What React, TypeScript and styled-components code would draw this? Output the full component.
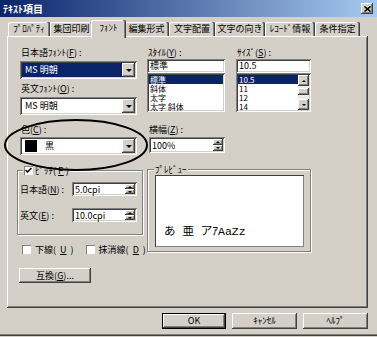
import React from 'react'
import styled, { createGlobalStyle } from 'styled-components'

const face = '#d4d0c8'
const shadow = '#808080'
const dark = '#404040'
const navy = '#0a246a'

const raised = `box-shadow: inset -1px -1px ${dark}, inset 1px 1px #fff, inset -2px -2px ${shadow};`
const sunken = `box-shadow: inset 1px 1px ${shadow}, inset -1px -1px #fff, inset 2px 2px ${dark}, inset -2px -2px ${face};`

const GlobalStyle = createGlobalStyle`
  html, body {
    margin: 0;
    padding: 0;
    background: ${face};
  }
  body {
    font-family: "Noto Sans CJK JP", "Liberation Sans", sans-serif;
    font-size: 9px;
    color: #000;
  }
  * {
    box-sizing: border-box;
  }
`

const Dialog = styled.div`
  width: 377px;
  height: 336px;
  display: flex;
  flex-direction: column;
  background: ${face};
  border-bottom: 1px solid ${dark};
  box-shadow: inset 0 -1px ${shadow};
`

const TitleBar = styled.div`
  flex: none;
  height: 17px;
  display: flex;
  align-items: center;
  justify-content: space-between;
  padding: 0 4px 0 3px;
  background: linear-gradient(to right, ${navy}, #a6caf0);
`

const Title = styled.span`
  color: #fff;
  font-weight: bold;
  font-size: 10px;
  line-height: 17px;
`

const CloseButton = styled.div`
  width: 12px;
  height: 11px;
  display: grid;
  place-items: center;
  background: ${face};
  ${raised}
`

const Body = styled.div`
  padding: 0 9px 0 7px;
`

const TabRow = styled.div`
  display: flex;
  align-items: flex-end;
  height: 16px;
  margin-top: 3px;
  padding-left: 1px;
`

const Tab = styled.div<{ $w: number; $active?: boolean }>`
  flex: none;
  position: relative;
  z-index: ${p => (p.$active ? 1 : 0)};
  width: ${p => p.$w + (p.$active ? 4 : 0)}px;
  height: ${p => (p.$active ? 18 : 14)}px;
  margin: ${p => (p.$active ? '0 -2px -2px' : '0')};
  padding-top: ${p => (p.$active ? 1 : 0)}px;
  line-height: 14px;
  text-align: center;
  white-space: nowrap;
  background: ${face};
  border-radius: 2px 2px 0 0;
  box-shadow: inset -1px 0 ${dark}, inset -2px 0 ${shadow}, inset 1px 1px #fff;
`

const Panel = styled.div`
  position: relative;
  height: 272px;
  padding: 11px 0 0 10px;
  display: grid;
  grid-template-columns: 126px 164px;
  column-gap: 4px;
  align-content: start;
  align-items: start;
  ${raised}
`

const Cell = styled.div<{ $mt?: number; $wide?: boolean }>`
  display: flex;
  flex-direction: column;
  align-items: flex-start;
  margin-top: ${p => p.$mt ?? 0}px;
  grid-column: ${p => (p.$wide ? '1 / -1' : 'auto')};
`

const FieldLabel = styled.div<{ $mt?: number; $ml?: number }>`
  height: 11px;
  line-height: 11px;
  white-space: nowrap;
  margin-top: ${p => p.$mt ?? 0}px;
  margin-left: ${p => p.$ml ?? 0}px;
`

const Combo = styled.div<{ $mt?: number }>`
  width: 117px;
  height: 18px;
  margin: ${p => p.$mt ?? 0}px 0 0 3px;
  display: flex;
  padding: 2px;
  background: #fff;
  ${sunken}
`

const ComboValue = styled.div<{ $selected?: boolean }>`
  flex: 1;
  display: flex;
  align-items: center;
  gap: 8px;
  padding-left: 3px;
  line-height: 14px;
  white-space: nowrap;
  background: ${p => (p.$selected ? navy : 'transparent')};
  color: ${p => (p.$selected ? '#fff' : '#000')};
`

const DropButton = styled.div`
  flex: none;
  width: 13px;
  display: grid;
  place-items: center;
  background: ${face};
  ${raised}
`

const Arrow = styled.span<{ $up?: boolean; $size?: number }>`
  width: 0;
  height: 0;
  border-left: ${p => p.$size ?? 3}px solid transparent;
  border-right: ${p => p.$size ?? 3}px solid transparent;
  ${p =>
    p.$up
      ? `border-bottom: ${p.$size ?? 3}px solid #000;`
      : `border-top: ${p.$size ?? 3}px solid #000;`}
`

const Swatch = styled.span`
  width: 12px;
  height: 12px;
  background: #000;
`

const Pickers = styled.div`
  display: flex;
  gap: 11px;
`

const Picker = styled.div<{ $w: number }>`
  width: ${p => p.$w}px;
  display: flex;
  flex-direction: column;
`

const Edit = styled.div`
  height: 14px;
  margin-top: 1px;
  padding-left: 3px;
  line-height: 14px;
  background: #fff;
  ${sunken}
`

const List = styled.div`
  height: 39px;
  padding: 2px;
  display: flex;
  overflow: hidden;
  background: #fff;
  ${sunken}
`

const Items = styled.div`
  flex: 1;
  display: flex;
  flex-direction: column;
`

const Item = styled.div<{ $selected?: boolean }>`
  flex: none;
  height: 9px;
  font-size: 8px;
  line-height: 9px;
  padding-left: 1px;
  white-space: nowrap;
  background: ${p => (p.$selected ? navy : 'transparent')};
  color: ${p => (p.$selected ? '#fff' : '#000')};
`

const ScrollBar = styled.div`
  flex: none;
  width: 11px;
  display: flex;
  flex-direction: column;
`

const ScrollButton = styled.div`
  height: 11px;
  display: grid;
  place-items: center;
  background: ${face};
  ${raised}
`

const Track = styled.div`
  flex: 1;
  padding-top: 2px;
  background: #ecebe8;
`

const Thumb = styled.div`
  height: 7px;
  background: ${face};
  ${raised}
`

const SpinEdit = styled.div<{ $w: number; $h: number; $mt?: number; $ml?: number }>`
  width: ${p => p.$w}px;
  height: ${p => p.$h}px;
  margin: ${p => p.$mt ?? 0}px 0 0 ${p => p.$ml ?? 0}px;
  display: flex;
  padding: 2px;
  background: #fff;
  ${sunken}
`

const SpinText = styled.div`
  flex: 1;
  padding-left: 1px;
  display: flex;
  align-items: center;
  white-space: nowrap;
`

const Spinner = styled.div`
  flex: none;
  width: 10px;
  display: flex;
  flex-direction: column;
`

const SpinHalf = styled.div`
  flex: 1;
  display: grid;
  place-items: center;
  background: ${face};
  ${raised}
`

const Group = styled.div<{ $w: number; $h: number; $mt: number }>`
  position: relative;
  width: ${p => p.$w}px;
  height: ${p => p.$h}px;
  margin-top: ${p => p.$mt}px;
  border: 1px solid ${shadow};
  box-shadow: inset 1px 1px #fff, 1px 1px #fff;
`

const Legend = styled.div<{ $left: number }>`
  position: absolute;
  top: -6px;
  left: ${p => p.$left}px;
  display: flex;
  align-items: center;
  gap: 2px;
  padding: 0 1px;
  height: 11px;
  line-height: 11px;
  background: ${face};
  white-space: nowrap;
`

const PitchRows = styled.div`
  display: flex;
  flex-direction: column;
  gap: 12px;
  padding: 11px 0 0 2px;
`

const PitchRow = styled.div`
  display: flex;
  align-items: center;
`

const PitchLabel = styled.span`
  width: 52px;
  white-space: nowrap;
`

const Check = styled.span`
  flex: none;
  width: 9px;
  height: 9px;
  display: grid;
  place-items: center;
  background: #fff;
  box-shadow: inset 1px 1px ${shadow}, inset -1px -1px #fff;
`

const CheckRow = styled.div`
  display: flex;
  gap: 12px;
  margin: 9px 0 0 5px;
  line-height: 11px;
`

const CheckItem = styled.label`
  display: flex;
  align-items: center;
  gap: 4px;
  white-space: nowrap;
`

const PreviewBox = styled.div`
  width: 149px;
  height: 72px;
  margin: 5px 0 0 7px;
  display: flex;
  align-items: flex-end;
  padding: 0 0 9px 9px;
  background: #fff;
  box-shadow: inset 1px 1px ${dark}, inset -1px -1px ${shadow};
`

const PreviewText = styled.span`
  font-family: "Liberation Mono", "Noto Sans CJK JP", monospace;
  font-size: 11.5px;
  line-height: 12px;
  white-space: pre;
`

const PushButton = styled.div<{ $w: number; $h: number; $default?: boolean }>`
  width: ${p => p.$w}px;
  height: ${p => p.$h}px;
  line-height: ${p => p.$h - (p.$default ? 2 : 0)}px;
  text-align: center;
  white-space: nowrap;
  background: ${face};
  border: ${p => (p.$default ? '1px solid #000' : 'none')};
  ${raised}
`

const CompatButton = styled(PushButton)`
  margin: 13px 0 0 2px;
`

const ButtonRow = styled.div`
  display: flex;
  justify-content: flex-end;
  gap: 6px;
  margin-top: 5px;
`

const Ellipse = styled.svg`
  position: absolute;
  left: -4px;
  top: 81px;
  overflow: visible;
  pointer-events: none;
`

const CheckMark = () => (
  <svg width="7" height="7" viewBox="0 0 7 7">
    <path d="M0.5 3 L2.5 5 L6.5 1" fill="none" stroke="#000" strokeWidth="1.5" />
  </svg>
)

const tabs = [
  { label: 'ﾌﾟﾛﾊﾟﾃｨ', w: 42 },
  { label: '集団印刷', w: 43 },
  { label: 'ﾌｫﾝﾄ', w: 31, active: true },
  { label: '編集形式', w: 45 },
  { label: '文字配置', w: 46 },
  { label: '文字の向き', w: 50 },
  { label: 'ﾚｺｰﾄﾞ情報', w: 50 },
  { label: '条件指定', w: 45 },
]

const App: React.FC = () => (
  <>
    <GlobalStyle />
    <Dialog>
      <TitleBar>
        <Title>ﾃｷｽﾄ項目</Title>
        <CloseButton>
          <svg width="7" height="6" viewBox="0 0 7 6">
            <path d="M0.5 0.5 L6.5 5.5 M6.5 0.5 L0.5 5.5" stroke="#000" strokeWidth="1.6" />
          </svg>
        </CloseButton>
      </TitleBar>
      <Body>
        <TabRow>
          {tabs.map(t => (
            <Tab key={t.label} $w={t.w} $active={t.active}>
              {t.label}
            </Tab>
          ))}
        </TabRow>
        <Panel>
          <Cell>
            <FieldLabel $ml={4}>
              日本語ﾌｫﾝﾄ(<u>F</u>) :
            </FieldLabel>
            <Combo $mt={3}>
              <ComboValue $selected>MS 明朝</ComboValue>
              <DropButton>
                <Arrow />
              </DropButton>
            </Combo>
            <FieldLabel $mt={4} $ml={4}>
              英文ﾌｫﾝﾄ(<u>O</u>) :
            </FieldLabel>
            <Combo $mt={3}>
              <ComboValue>MS 明朝</ComboValue>
              <DropButton>
                <Arrow />
              </DropButton>
            </Combo>
          </Cell>
          <Cell>
            <Pickers>
              <Picker $w={78}>
                <FieldLabel $ml={1}>
                  ｽﾀｲﾙ(<u>Y</u>) :
                </FieldLabel>
                <Edit>標準</Edit>
                <List>
                  <Items>
                    <Item $selected>標準</Item>
                    <Item>斜体</Item>
                    <Item>太字</Item>
                    <Item>太字 斜体</Item>
                  </Items>
                </List>
              </Picker>
              <Picker $w={75}>
                <FieldLabel $ml={1}>
                  ｻｲｽﾞ(<u>S</u>) :
                </FieldLabel>
                <Edit>10.5</Edit>
                <List>
                  <Items>
                    <Item $selected>10.5</Item>
                    <Item>11</Item>
                    <Item>12</Item>
                    <Item>14</Item>
                  </Items>
                  <ScrollBar>
                    <ScrollButton>
                      <Arrow $up $size={2} />
                    </ScrollButton>
                    <Track>
                      <Thumb />
                    </Track>
                    <ScrollButton>
                      <Arrow $size={2} />
                    </ScrollButton>
                  </ScrollBar>
                </List>
              </Picker>
            </Pickers>
          </Cell>

          <Cell $mt={9}>
            <FieldLabel $ml={4}>
              色(<u>C</u>) :
            </FieldLabel>
            <Combo $mt={2}>
              <ComboValue>
                <Swatch />
                黒
              </ComboValue>
              <DropButton>
                <Arrow />
              </DropButton>
            </Combo>
          </Cell>
          <Cell $mt={9}>
            <FieldLabel $ml={2}>
              横幅(<u>Z</u>) :
            </FieldLabel>
            <SpinEdit $w={76} $h={16} $mt={2} $ml={2}>
              <SpinText>100%</SpinText>
              <Spinner>
                <SpinHalf>
                  <Arrow $up $size={2} />
                </SpinHalf>
                <SpinHalf>
                  <Arrow $size={2} />
                </SpinHalf>
              </Spinner>
            </SpinEdit>
          </Cell>

          <Cell $mt={10}>
            <Group $w={126} $h={65} $mt={5}>
              <Legend $left={5}>
                <Check>
                  <CheckMark />
                </Check>
                ﾋﾟｯﾁ(<u>P</u>)
              </Legend>
              <PitchRows>
                <PitchRow>
                  <PitchLabel>
                    日本語(<u>N</u>) :
                  </PitchLabel>
                  <SpinEdit $w={65} $h={14}>
                    <SpinText>5.0cpi</SpinText>
                    <Spinner>
                      <SpinHalf>
                        <Arrow $up $size={2} />
                      </SpinHalf>
                      <SpinHalf>
                        <Arrow $size={2} />
                      </SpinHalf>
                    </Spinner>
                  </SpinEdit>
                </PitchRow>
                <PitchRow>
                  <PitchLabel>
                    英文(<u>E</u>) :
                  </PitchLabel>
                  <SpinEdit $w={65} $h={14}>
                    <SpinText>10.0cpi</SpinText>
                    <Spinner>
                      <SpinHalf>
                        <Arrow $up $size={2} />
                      </SpinHalf>
                      <SpinHalf>
                        <Arrow $size={2} />
                      </SpinHalf>
                    </Spinner>
                  </SpinEdit>
                </PitchRow>
              </PitchRows>
            </Group>
            <CheckRow>
              <CheckItem>
                <Check />
                下線(<u>U</u>)
              </CheckItem>
              <CheckItem>
                <Check />
                抹消線(<u>D</u>)
              </CheckItem>
            </CheckRow>
          </Cell>
          <Cell $mt={10}>
            <Group $w={164} $h={83} $mt={4}>
              <Legend $left={6}>ﾌﾟﾚﾋﾞｭｰ</Legend>
              <PreviewBox>
                <PreviewText>あ 亜 アｱAaZz</PreviewText>
              </PreviewBox>
            </Group>
          </Cell>

          <Cell $wide>
            <CompatButton $w={72} $h={15}>
              互換(<u>G</u>)...
            </CompatButton>
          </Cell>

          <Ellipse width="146" height="56" viewBox="0 0 146 56">
            <ellipse cx="73" cy="28" rx="71" ry="25" fill="none" stroke="#000" strokeWidth="2" />
          </Ellipse>
        </Panel>
        <ButtonRow>
          <PushButton $w={64} $h={16} $default>
            OK
          </PushButton>
          <PushButton $w={65} $h={16}>
            ｷｬﾝｾﾙ
          </PushButton>
          <PushButton $w={65} $h={16}>
            ﾍﾙﾌﾟ
          </PushButton>
        </ButtonRow>
      </Body>
    </Dialog>
  </>
)

export default App
